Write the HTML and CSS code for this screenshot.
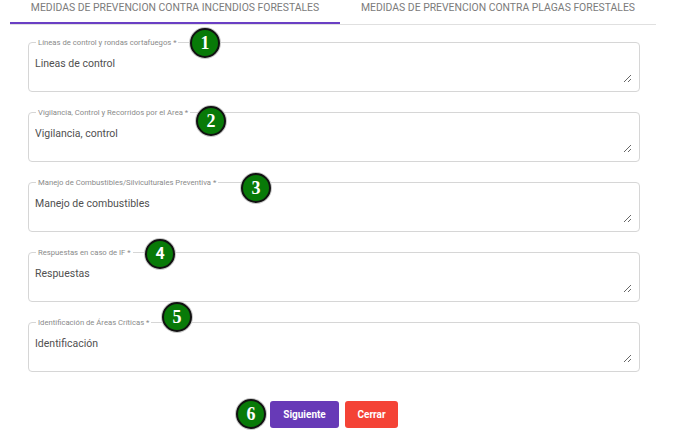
FILE: index.html
```html
<!DOCTYPE html>
<html lang="es">
<head>
<meta charset="utf-8">
<title>Medidas de prevención</title>
<link rel="stylesheet" href="styles.css">
</head>
<body>
<div class="page">
  <div class="tabs">
    <div class="tab tab-active">Medidas de prevencion contra incendios forestales</div>
    <div class="tab tab-second">Medidas de prevencion contra plagas forestales</div>
  </div>
  <form class="form">
    <fieldset class="field">
      <legend class="field-label">Líneas de control y rondas cortafuegos *</legend>
      <textarea class="field-input">Lineas de control</textarea>
    </fieldset>
    <fieldset class="field">
      <legend class="field-label">Vigilancia, Control y Recorridos por el Area *</legend>
      <textarea class="field-input">Vigilancia, control</textarea>
    </fieldset>
    <fieldset class="field">
      <legend class="field-label">Manejo de Combustibles/Silviculturales Preventiva *</legend>
      <textarea class="field-input">Manejo de combustibles</textarea>
    </fieldset>
    <fieldset class="field">
      <legend class="field-label">Respuestas en caso de IF *</legend>
      <textarea class="field-input">Respuestas</textarea>
    </fieldset>
    <fieldset class="field">
      <legend class="field-label">Identificación de Áreas Críticas *</legend>
      <textarea class="field-input">Identificación</textarea>
    </fieldset>
    <div class="actions">
      <button type="button" class="btn btn-primary">Siguiente</button>
      <button type="button" class="btn btn-danger">Cerrar</button>
    </div>
  </form>
  <span class="badge badge-1">1</span>
  <span class="badge badge-2">2</span>
  <span class="badge badge-3">3</span>
  <span class="badge badge-4">4</span>
  <span class="badge badge-5">5</span>
  <span class="badge badge-6">6</span>
</div>
</body>
</html>
```
FILE: styles.css
```css
html, body {
  margin: 0;
  padding: 0;
  background: #ffffff;
}
body {
  font-family: Roboto, "Liberation Sans", Arial, sans-serif;
  color: #444;
  overflow: hidden;
}
.page {
  position: relative;
  width: 677px;
  height: 441px;
}
.tabs {
  display: flex;
  margin-left: 10px;
  width: 646px;
  border-bottom: 1px solid #e0e0e0;
}
.tab {
  height: 24px;
  box-sizing: border-box;
  font-size: 10.4px;
  line-height: 16px;
  text-transform: uppercase;
  color: #7b7b7b;
  text-align: center;
  white-space: nowrap;
}
.tab-active {
  width: 330px;
  box-shadow: inset 0 -2px 0 #6a3fc4;
}
.tab-second {
  width: 316px;
}
.form {
  display: flex;
  flex-direction: column;
  gap: 16px;
  margin: 13px 0 0 28px;
  width: 612px;
}
.field {
  margin: 0;
  padding: 0 7px 0 6px;
  border: 1px solid #d6d6d6;
  border-radius: 4px;
  min-width: 0;
  height: 54px;
  box-sizing: border-box;
  display: flex;
  flex-direction: column;
}
.field-label {
  font-size: 7.7px;
  line-height: 9px;
  color: #8a8a8a;
  padding: 0 2px;
  margin-left: 1px;
}
.field-input {
  display: block;
  border: none;
  outline: none;
  padding: 0;
  margin: 9px 0 0 0;
  font-family: Roboto, "Liberation Sans", Arial, sans-serif;
  font-size: 10.5px;
  line-height: 16px;
  color: #505050;
  height: 27px;
  width: 100%;
  box-sizing: border-box;
  resize: vertical;
  background: transparent;
}
.actions {
  display: flex;
  justify-content: center;
  gap: 6px;
  margin-top: 13px;
}
.btn {
  border: none;
  border-radius: 3px;
  color: #fff;
  font-family: Roboto, "Liberation Sans", Arial, sans-serif;
  font-weight: 700;
  font-size: 10px;
  height: 27px;
  padding: 0;
}
.btn-primary {
  background: #673ab7;
  width: 69px;
}
.btn-danger {
  background: #f44336;
  width: 53px;
}
.badge {
  position: absolute;
  width: 30px;
  height: 30px;
  box-sizing: border-box;
  border-radius: 50%;
  background: #087a08;
  border: 2px solid #111;
  box-shadow: 0 0 0 1px #c8c8c8;
  color: #fff;
  font-family: "Liberation Serif", "Times New Roman", serif;
  font-weight: 700;
  font-size: 18px;
  line-height: 26px;
  text-align: center;
}
.badge-1 { left: 190px; top: 28px; }
.badge-2 { left: 196px; top: 106px; }
.badge-3 { left: 241px; top: 173px; }
.badge-4 { left: 145px; top: 239px; font-family: Roboto, "Liberation Sans", Arial, sans-serif; font-size: 16px; }
.badge-5 { left: 162px; top: 302px; }
.badge-6 { left: 236px; top: 399px; }
```
